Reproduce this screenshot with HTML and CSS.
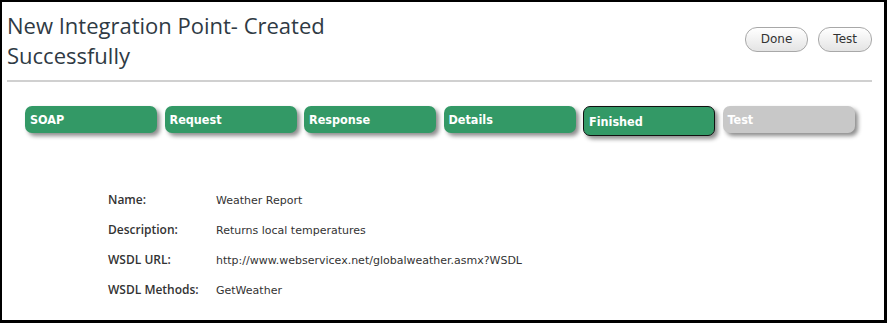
FILE: index.html
```html
<!DOCTYPE html>
<html lang="en">
    <head>
        <title>New Integration Point</title>
        <link rel="stylesheet" href="styles.css">
    </head>
    <body>
        <div class="frame">
            <div class="header">
                <h1>New Integration Point- Created<br>Successfully</h1>
                <div class="actions">
                    <button class="pill">Done</button>
                    <button class="pill">Test</button>
                </div>
            </div>

            <div class="steps">
                <span class="step">SOAP</span>
                <span class="step">Request</span>
                <span class="step">Response</span>
                <span class="step">Details</span>
                <span class="step current">Finished</span>
                <span class="step disabled">Test</span>
            </div>

            <!--summary of the new point-->
            <div class="summary">
                <span class="label">Name:</span>
                <span class="value">Weather Report</span>
                <span class="label">Description:</span>
                <span class="value">Returns local temperatures</span>
                <span class="label">WSDL URL:</span>
                <span class="value">http://www.webservicex.net/globalweather.asmx?WSDL</span>
                <span class="label">WSDL Methods:</span>
                <span class="value">GetWeather</span>
            </div>
        </div>
    </body>
</html>
```

FILE: styles.css
```css
body
{
    margin: 0;
    background-color: white;
    font-family: 'Open Sans', sans-serif;
    color: #333;
}

.frame
{
    box-sizing: border-box;
    width: 887px;
    height: 323px;
    border: 2px solid black;
    border-right-width: 3px;
    border-bottom-width: 3px;
    padding: 0 12px 0 5px;
}

.header
{
    display: flex;
    justify-content: space-between;
    align-items: center;
    border-bottom: 2px solid #d0d0d0;
    padding-bottom: 10px;
}

h1
{
    margin: 8px 0 0 0;
    font-size: 22px;
    font-weight: 400;
    line-height: 30px;
    color: #2f3a44;
}

.actions
{
    display: flex;
    gap: 10px;
    margin-top: 6px;
}

.pill
{
    font-family: 'DejaVu Sans', sans-serif;
    font-size: 12px;
    color: #333;
    height: 25px;
    padding: 0 14px;
    border: 1px solid #a8a8a8;
    border-radius: 12px;
    background: linear-gradient(#ffffff, #e4e4e4);
}

.pill:first-child
{
    padding: 0 15px;
}

.steps
{
    display: flex;
    gap: 7.5px;
    padding: 24px 0 0 18px;
}

.step
{
    box-sizing: border-box;
    width: 132px;
    height: 27px;
    padding: 6px 5px 0;
    background-color: #339966;
    color: white;
    font-family: 'DejaVu Sans Condensed', sans-serif;
    font-size: 12.5px;
    font-weight: 700;
    border-radius: 7px;
    box-shadow: 3px 3px 4px rgba(0, 0, 0, 0.45);
}

.step.current
{
    border: 1px solid #111;
    height: 30px;
    padding: 7px 5px 0;
}

.step.disabled
{
    background-color: #c8c8c8;
}

.summary
{
    display: grid;
    grid-template-columns: 108px auto;
    row-gap: 12px;
    padding: 55px 0 0 101px;
    align-items: baseline;
    line-height: 17px;
}

.label
{
    font-family: 'Open Sans', sans-serif;
    font-size: 12px;
    font-weight: 600;
    color: #333;
}

.value
{
    font-family: 'DejaVu Sans', sans-serif;
    font-size: 11px;
    color: #333;
}
```
